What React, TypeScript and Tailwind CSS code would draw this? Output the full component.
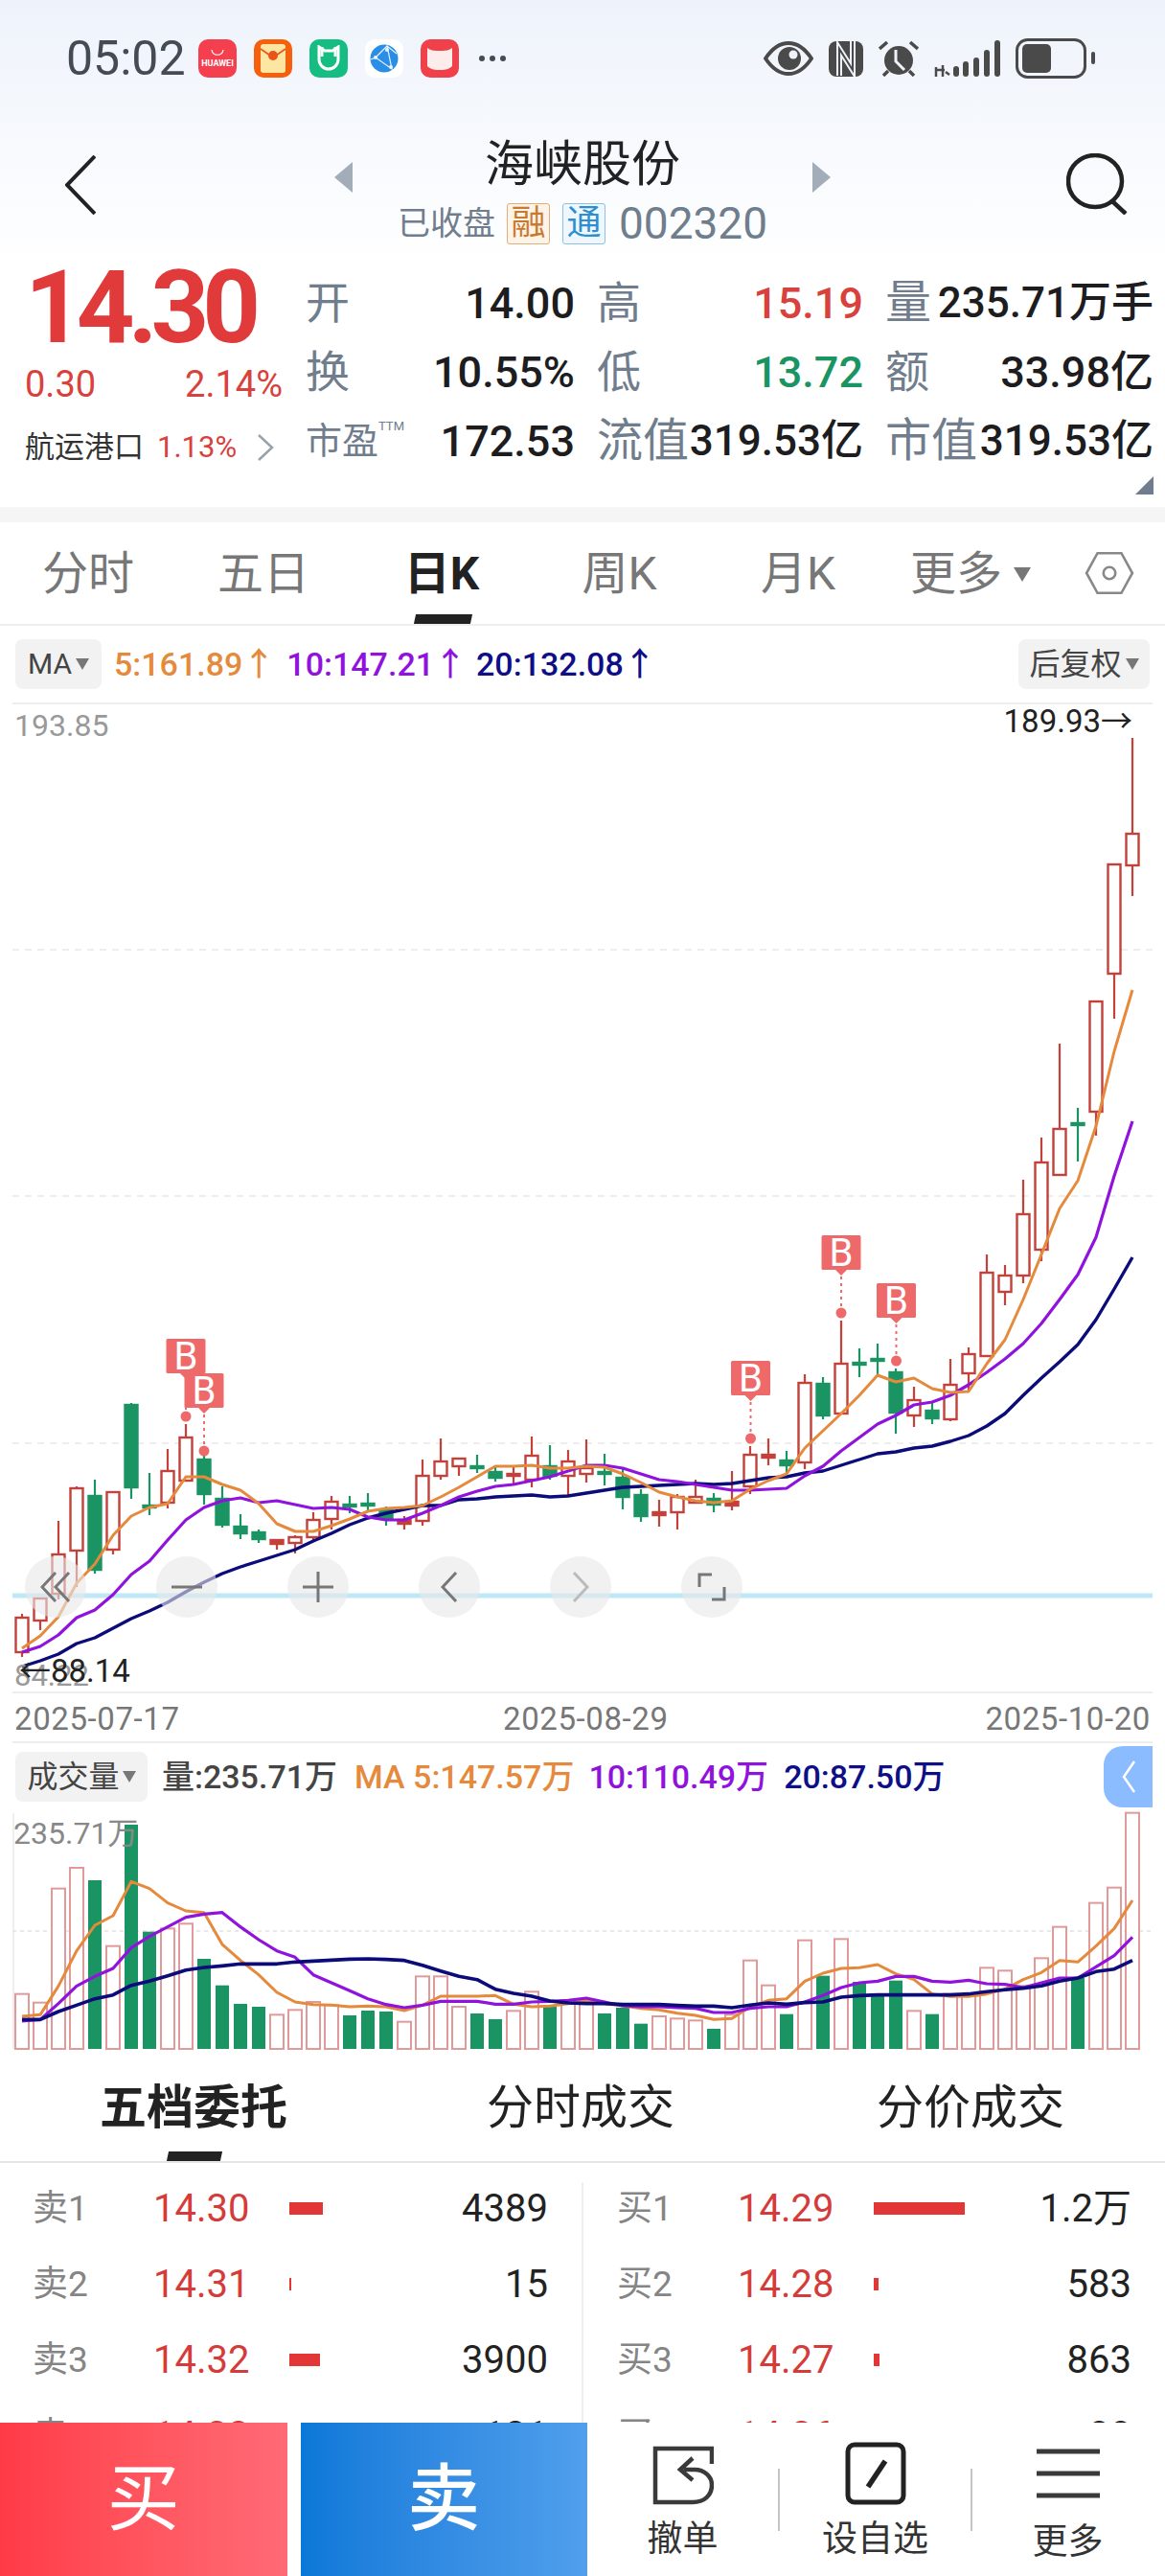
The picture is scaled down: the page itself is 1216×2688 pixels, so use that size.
import React from "react";

const RED = "#c4403a";
const GREEN = "#1b9464";
const ORANGE = "#e58a3c";
const PURPLE = "#9013dd";
const NAVY = "#0b0b7a";

// [colour, high, body top, body bottom, low]
const candles: [string, number, number, number, number][] = [
  ["r", 1685, 1689, 1725, 1730], ["r", 1669, 1669, 1692, 1702], ["r", 1588, 1623, 1664, 1670], ["r", 1552, 1554, 1619, 1657],
  ["g", 1545, 1562, 1639, 1643], ["r", 1558, 1558, 1618, 1623], ["g", 1465, 1467, 1553, 1565], ["g", 1538, 1572, 1574, 1582],
  ["r", 1513, 1536, 1569, 1575], ["r", 1487, 1501, 1546, 1546], ["g", 1520, 1524, 1560, 1571], ["g", 1552, 1565, 1592, 1595],
  ["g", 1581, 1594, 1601, 1607], ["g", 1597, 1600, 1607, 1611], ["r", 1607, 1608, 1612, 1618], ["r", 1603, 1605, 1611, 1622],
  ["r", 1579, 1587, 1605, 1609], ["r", 1562, 1568, 1586, 1597], ["g", 1562, 1571, 1573, 1580], ["g", 1559, 1570, 1572, 1577],
  ["g", 1573, 1577, 1586, 1593], ["r", 1583, 1587, 1591, 1597], ["r", 1524, 1541, 1588, 1593], ["r", 1502, 1526, 1541, 1545],
  ["r", 1522, 1523, 1531, 1541], ["g", 1519, 1531, 1533, 1538], ["g", 1532, 1537, 1543, 1547], ["r", 1532, 1539, 1541, 1550],
  ["r", 1500, 1520, 1545, 1553], ["g", 1509, 1531, 1541, 1545], ["r", 1514, 1526, 1541, 1561], ["r", 1503, 1533, 1539, 1548],
  ["g", 1518, 1537, 1539, 1551], ["g", 1534, 1543, 1563, 1576], ["g", 1555, 1561, 1583, 1589], ["r", 1566, 1579, 1582, 1594],
  ["r", 1560, 1563, 1579, 1597], ["r", 1545, 1563, 1569, 1569], ["g", 1559, 1565, 1571, 1579], ["r", 1536, 1568, 1572, 1577],
  ["r", 1510, 1519, 1552, 1560], ["r", 1502, 1519, 1522, 1530], ["g", 1515, 1525, 1530, 1538], ["r", 1435, 1444, 1527, 1534],
  ["g", 1438, 1445, 1478, 1482], ["r", 1379, 1424, 1476, 1476], ["g", 1408, 1423, 1425, 1438], ["g", 1403, 1419, 1421, 1436],
  ["g", 1429, 1433, 1475, 1497], ["r", 1448, 1462, 1478, 1490], ["g", 1464, 1473, 1481, 1487], ["r", 1419, 1446, 1482, 1484],
  ["r", 1407, 1414, 1434, 1452], ["r", 1310, 1329, 1416, 1416], ["r", 1321, 1332, 1349, 1363], ["r", 1232, 1268, 1332, 1340],
  ["r", 1188, 1214, 1305, 1317], ["r", 1090, 1179, 1227, 1227], ["g", 1157, 1173, 1175, 1213], ["r", 1046, 1046, 1161, 1186],
  ["r", 903, 903, 1017, 1064], ["r", 771, 871, 904, 936],
];

const ma5 = [1721, 1708, 1688, 1653, 1633, 1603, 1583, 1574, 1570, 1542, 1542, 1550, 1556, 1570, 1591, 1599, 1599, 1593, 1586, 1578, 1575, 1574, 1572, 1563, 1553, 1542, 1531, 1531, 1530, 1533, 1533, 1531, 1532, 1539, 1548, 1558, 1563, 1567, 1569, 1567, 1555, 1546, 1539, 1512, 1494, 1476, 1457, 1436, 1443, 1439, 1450, 1454, 1453, 1424, 1399, 1357, 1310, 1262, 1233, 1176, 1098, 1034];
const ma10 = [1725, 1719, 1707, 1689, 1681, 1665, 1644, 1630, 1608, 1587, 1574, 1567, 1564, 1569, 1567, 1571, 1575, 1574, 1576, 1584, 1587, 1587, 1580, 1572, 1563, 1557, 1552, 1550, 1546, 1542, 1536, 1530, 1530, 1533, 1539, 1545, 1547, 1550, 1553, 1556, 1556, 1555, 1554, 1541, 1531, 1515, 1501, 1487, 1478, 1467, 1464, 1457, 1446, 1433, 1419, 1403, 1382, 1357, 1331, 1292, 1228, 1171];
const ma20 = [1740, 1734, 1727, 1716, 1710, 1700, 1690, 1682, 1673, 1662, 1652, 1643, 1636, 1630, 1624, 1618, 1609, 1601, 1592, 1585, 1580, 1576, 1572, 1572, 1566, 1565, 1563, 1562, 1561, 1563, 1562, 1559, 1556, 1553, 1552, 1551, 1550, 1549, 1550, 1549, 1546, 1543, 1542, 1538, 1536, 1530, 1524, 1518, 1516, 1512, 1510, 1505, 1499, 1489, 1476, 1457, 1439, 1422, 1404, 1378, 1346, 1313];

const volTops = [905, 932, 575, 510, 549, 755, 375, 710, 700, 685, 795, 878, 936, 945, 970, 955, 930, 940, 972, 957, 960, 992, 850, 850, 945, 966, 984, 958, 898, 945, 935, 930, 966, 948, 998, 975, 982, 988, 1014, 970, 800, 878, 968, 737, 848, 733, 867, 912, 863, 958, 968, 905, 910, 823, 832, 880, 793, 695, 855, 620, 572, 338];
const volMa5 = [975, 970, 880, 770, 690, 660, 553, 575, 620, 645, 650, 750, 800, 845, 900, 930, 938, 940, 945, 943, 945, 957, 940, 912, 912, 912, 910, 937, 945, 943, 935, 925, 935, 942, 950, 955, 965, 972, 985, 982, 945, 925, 920, 865, 840, 825, 823, 813, 842, 860, 905, 913, 913, 905, 890, 860, 838, 800, 805, 755, 700, 612];
const volMa10 = [990, 985, 935, 880, 850, 825, 760, 725, 695, 665, 655, 650, 695, 735, 770, 790, 845, 870, 895, 920, 938, 948, 940, 928, 928, 928, 937, 937, 930, 928, 925, 918, 930, 942, 945, 945, 948, 950, 963, 963, 950, 945, 945, 930, 910, 885, 870, 865, 850, 850, 865, 868, 862, 873, 875, 885, 870, 855, 855, 820, 785, 727];
const volMa20 = [985, 985, 960, 940, 920, 908, 878, 865, 848, 830, 822, 817, 811, 811, 811, 805, 802, 799, 796, 795, 797, 800, 815, 833, 850, 860, 890, 903, 912, 927, 933, 935, 935, 938, 938, 938, 941, 943, 943, 948, 940, 933, 937, 932, 930, 915, 910, 908, 908, 908, 908, 908, 905, 898, 892, 887, 880, 865, 855, 835, 827, 800];

const markers = [
  { x: 194, top: 1398, dot: 1479 },
  { x: 213, top: 1434, dot: 1515 },
  { x: 783.5, top: 1421, dot: 1502 },
  { x: 878, top: 1290, dot: 1371 },
  { x: 935.5, top: 1340, dot: 1421 },
];

const candleX = (i: number) => 23 + 19 * i;
const volY = (v: number) => 1780 + v / 3;
const points = (ys: number[]) => ys.map((y, i) => `${candleX(i)},${y}`).join(" ");

const sell = [
  { label: "卖1", price: "14.30", bar: 35, value: "4389" },
  { label: "卖2", price: "14.31", bar: 1.5, value: "15" },
  { label: "卖3", price: "14.32", bar: 32, value: "3900" },
  { label: "卖4", price: "14.33", bar: 2, value: "131" },
];
const buy = [
  { label: "买1", price: "14.29", bar: 95, value: "1.2万" },
  { label: "买2", price: "14.28", bar: 4.5, value: "583" },
  { label: "买3", price: "14.27", bar: 6, value: "863" },
  { label: "买4", price: "14.26", bar: 1.5, value: "88" },
];

function QuoteCell({ label, value, color, tight }: { label: string; value: string; color?: string; tight?: boolean }) {
  return (
    <div className="flex items-center justify-between whitespace-nowrap">
      <span className={`leading-none text-[#6f7d8c] ${tight ? "text-[48px]" : "text-[46px]"}`}>{label}</span>
      <span className={`font-medium leading-none ${tight ? "text-[44px]" : "text-[45px]"} ${color ?? "text-[#1d1d1f]"}`}>{value}</span>
    </div>
  );
}

function OrderRow({ row }: { row: { label: string; price: string; bar: number; value: string } }) {
  return (
    <div className="flex h-[79px] shrink-0 items-center">
      <span className="w-[126px] text-[37px] leading-none text-[#858585]">{row.label}</span>
      <span className="w-[142px] text-[40px] leading-none text-[#d43c3c]">{row.price}</span>
      <div className="flex-1">
        <div className="h-[13px] bg-[#e33737]" style={{ width: row.bar }} />
      </div>
      <span className="text-[40px] leading-none text-[#222]">{row.value}</span>
    </div>
  );
}

function RoundButton({ className, children }: { className: string; children: React.ReactNode }) {
  return (
    <div className={`absolute top-[891px] flex h-[64px] w-[64px] items-center justify-center rounded-full bg-[#e8e8e8]/60 ${className}`}>
      {children}
    </div>
  );
}

export default function App() {
  return (
    <div className="flex h-[2688px] w-[1216px] flex-col overflow-hidden bg-white font-[Roboto,'Noto_Sans_CJK_SC',sans-serif]">
      {/* header */}
      <div className="h-[280px] shrink-0 bg-linear-to-b from-[#eef3fb] to-white">
        <div className="flex h-[122px] items-center pl-[69px]">
          <span className="w-[138px] text-[50px] leading-none text-[#444b52]">05:02</span>
          <div className="flex items-center gap-[18px]">
            <div className="flex h-[40px] w-[40px] flex-col items-center justify-center rounded-[10px] bg-[#f4404e]">
              <svg width="16" height="9" viewBox="0 0 16 9"><path d="M2 1c1 7 11 7 12 0" fill="none" stroke="#fff" strokeWidth="1.2" /></svg>
              <span className="mt-[1px] text-[9px] font-bold leading-[11px] text-white">HUAWEI</span>
            </div>
            <div className="flex h-[40px] w-[40px] items-center justify-center rounded-[10px] bg-[#f4600c]">
              <svg width="28" height="32" viewBox="0 0 28 32">
                <rect x="1" y="1" width="26" height="30" rx="3" fill="#fde6a2" />
                <path d="M1 6l13 9L27 6" fill="none" stroke="#e8541a" strokeWidth="1.6" />
                <circle cx="14" cy="13" r="5" fill="#e8541a" />
              </svg>
            </div>
            <div className="flex h-[40px] w-[40px] items-center justify-center rounded-[10px] bg-[#16bd83]">
              <svg width="26" height="28" viewBox="0 0 26 28">
                <path d="M3 2l6 4h8l6-4v13a10 10 0 0 1-20 0z" fill="none" stroke="#fff" strokeWidth="3" />
                <path d="M6 2v10M20 2v10" stroke="#fff" strokeWidth="3" />
              </svg>
            </div>
            <div className="flex h-[40px] w-[40px] items-center justify-center rounded-[10px] bg-white">
              <svg width="30" height="30" viewBox="0 0 30 30">
                <circle cx="15" cy="15" r="14.5" fill="#2b8ee6" />
                <path d="M18 2L6 14l17 12zM18 2l5 24M6 14l-5 2M18 2l10 8" fill="none" stroke="#e7f3fd" strokeWidth="1.2" />
                <circle cx="18" cy="6" r="2" fill="#e7f3fd" />
                <circle cx="6" cy="14" r="2" fill="#e7f3fd" />
                <circle cx="22" cy="24" r="2" fill="#e7f3fd" />
              </svg>
            </div>
            <div className="flex h-[40px] w-[40px] items-center justify-center rounded-[10px] bg-[#f0404a]">
              <svg width="28" height="28" viewBox="0 0 28 28"><path d="M1 3c4 3 8 3 13 3s9 0 13-3v19c-4 4-9 4-13 4s-9 0-13-4z" fill="#fcecec" /></svg>
            </div>
          </div>
          <div className="ml-[21px] flex gap-[5px]">
            <span className="h-[6px] w-[6px] rounded-full bg-[#444b52]" />
            <span className="h-[6px] w-[6px] rounded-full bg-[#444b52]" />
            <span className="h-[6px] w-[6px] rounded-full bg-[#444b52]" />
          </div>
          <div className="ml-[269px] flex items-center">
            <svg width="52" height="36" viewBox="0 0 52 36">
              <path d="M2 18C10 6 18 2 26 2s16 4 24 16c-8 12-16 16-24 16S10 30 2 18z" fill="none" stroke="#4a4a4a" strokeWidth="4" />
              <circle cx="27" cy="18" r="12" fill="#4a4a4a" />
              <circle cx="31" cy="14" r="4.5" fill="#eef3fb" />
            </svg>
            <svg className="ml-[16px]" width="36" height="37" viewBox="0 0 36 37">
              <rect width="36" height="37" rx="8" fill="#4a4a4a" />
              <path d="M11 36V8l14 22V0" fill="none" stroke="#eef3fb" strokeWidth="6" />
              <path d="M11 36V8l14 22V0" fill="none" stroke="#4a4a4a" strokeWidth="2" />
            </svg>
            <svg className="ml-[16px]" width="42" height="38" viewBox="0 0 42 38">
              <circle cx="21" cy="21" r="15" fill="#4a4a4a" />
              <path d="M18 10v12l9 9" fill="none" stroke="#eef3fb" strokeWidth="3" />
              <path d="M1 9l8-7M41 9l-8-7M5 37l5-5M37 37l-5-5" stroke="#4a4a4a" strokeWidth="3.5" />
            </svg>
            <svg className="ml-[15px]" width="70" height="38" viewBox="0 0 70 38">
              <path d="M3 31h9M3 28v10M10 26v12M13 33l4 3" fill="none" stroke="#4a4a4a" strokeWidth="2.5" />
              <rect x="21" y="27" width="6" height="11" rx="3" fill="#4a4a4a" />
              <rect x="31" y="22" width="6" height="16" rx="3" fill="#4a4a4a" />
              <rect x="42" y="18" width="6" height="20" rx="3" fill="#4a4a4a" />
              <rect x="53" y="10" width="6" height="28" rx="3" fill="#4a4a4a" />
              <rect x="64" y="0" width="6" height="38" rx="3" fill="#4a4a4a" />
            </svg>
            <svg className="ml-[16px]" width="83" height="42" viewBox="0 0 83 42">
              <rect x="1.5" y="1.5" width="71" height="39" rx="11" fill="none" stroke="#4a4a4a" strokeWidth="3" />
              <rect x="7" y="6" width="30" height="30" rx="5" fill="#4a4a4a" />
              <rect x="79" y="14" width="4" height="13" rx="2" fill="#4a4a4a" />
            </svg>
          </div>
        </div>
        <div className="flex h-[158px]">
          <div className="w-[349px] pl-[68px] pt-[40px]">
            <svg width="32" height="62" viewBox="0 0 32 62"><path d="M31 1L2 31l29 30" fill="none" stroke="#222" strokeWidth="4" /></svg>
          </div>
          <svg className="mt-[47px]" width="19" height="32" viewBox="0 0 19 32"><path d="M19 0v32L0 16z" fill="#a2adb9" /></svg>
          <div className="flex flex-1 flex-col items-center pt-[24px]">
            <span className="h-[52px] text-[51px] leading-[52px] text-[#222]">海峡股份</span>
            <div className="mt-[13px] flex h-[44px] items-center">
              <span className="text-[34px] leading-none text-[#6f7d8c]">已收盘</span>
              <span className="ml-[12px] flex h-[43px] w-[45px] items-center justify-center rounded-[3px] border border-[#dfae7c] bg-[#fdf3e7] text-[36px] leading-none text-[#c87a30]">融</span>
              <span className="ml-[13px] flex h-[43px] w-[45px] items-center justify-center rounded-[3px] border border-[#8fc0e4] bg-[#eef7fd] text-[36px] leading-none text-[#2f8ed0]">通</span>
              <span className="ml-[14px] text-[46px] leading-none text-[#6f7d8c]">002320</span>
            </div>
          </div>
          <svg className="mt-[47px]" width="19" height="32" viewBox="0 0 19 32"><path d="M0 0v32l19-16z" fill="#a2adb9" /></svg>
          <div className="w-[349px] pl-[246px] pt-[38px]">
            <svg width="66" height="64" viewBox="0 0 66 64">
              <ellipse cx="30" cy="29" rx="28" ry="27" fill="none" stroke="#222" strokeWidth="4.5" />
              <path d="M48 50l14 13" stroke="#222" strokeWidth="4.5" />
            </svg>
          </div>
        </div>
      </div>

      {/* quote */}
      <div className="relative flex h-[249px] shrink-0 bg-white">
        <div className="w-[319px] shrink-0 pl-[26px]">
          <div className="h-[82px] text-[106px] font-bold leading-[82px] tracking-[-7px] text-[#e03a3a]">14.30</div>
          <div className="mt-[20px] flex w-[269px] justify-between text-[38px] leading-none text-[#d8413c]">
            <span>0.30</span>
            <span>2.14%</span>
          </div>
          <div className="mt-[31px] flex items-center">
            <span className="w-[138px] text-[31px] leading-none text-[#333]">航运港口</span>
            <span className="w-[104px] text-[31px] leading-none text-[#d8413c]">1.13%</span>
            <svg width="18" height="28" viewBox="0 0 18 28"><path d="M2 1l14 13L2 27" fill="none" stroke="#98a2ac" strokeWidth="2.5" /></svg>
          </div>
        </div>
        <div className="grid h-[216px] grid-cols-[281px_278px_280px] grid-rows-3 gap-x-[23px]">
          <QuoteCell label="开" value="14.00" />
          <QuoteCell label="高" value="15.19" color="text-[#d8413c]" />
          <QuoteCell label="量" value="235.71万手" tight />
          <QuoteCell label="换" value="10.55%" />
          <QuoteCell label="低" value="13.72" color="text-[#1b9464]" />
          <QuoteCell label="额" value="33.98亿" />
          <div className="flex items-center justify-between whitespace-nowrap">
            <span className="flex items-start text-[38px] leading-none text-[#6f7d8c]">
              市盈<span className="mt-[-3px] text-[13px] leading-none">TTM</span>
            </span>
            <span className="text-[45px] font-medium leading-none text-[#1d1d1f]">172.53</span>
          </div>
          <QuoteCell label="流值" value="319.53亿" tight />
          <QuoteCell label="市值" value="319.53亿" tight />
        </div>
        <svg className="absolute left-[1185px] top-[217px]" width="19" height="19" viewBox="0 0 19 19"><path d="M19 0v19H0z" fill="#6f7d8c" /></svg>
      </div>

      <div className="h-[16px] shrink-0 bg-[#f5f5f5]" />

      {/* period tabs */}
      <div className="flex h-[108px] shrink-0 items-center border-b-2 border-[#eeeeee]">
        <div className="grid h-full w-[1116px] grid-cols-6 items-center pt-[2px] text-center text-[48px] leading-none text-[#777]">
          <span className="pr-[2px]">分时</span>
          <span className="pr-[8px]">五日</span>
          <span className="relative flex h-full items-center justify-center pr-[8px] font-bold text-[#222]">
            日K
            <span className="absolute bottom-0 left-[61px] h-[10px] w-[59px] -skew-x-12 bg-[#222]" />
          </span>
          <span className="pr-[9px]">周K</span>
          <span className="pr-[8px]">月K</span>
          <span className="flex items-center justify-center pr-[20px]">
            更多
            <svg className="ml-[12px]" width="18" height="15" viewBox="0 0 18 15"><path d="M0 0h18L9 15z" fill="#777" /></svg>
          </span>
        </div>
        <svg className="ml-[16px]" width="52" height="46" viewBox="0 0 50 44">
          <path d="M13 2h24l11 20-11 20H13L2 22z" fill="none" stroke="#888" strokeWidth="2.5" />
          <circle cx="25" cy="22" r="6" fill="none" stroke="#888" strokeWidth="2.5" />
        </svg>
      </div>

      {/* MA legend */}
      <div className="flex h-[80px] shrink-0 items-center justify-between pl-[16px] pr-[16px]">
        <div className="flex items-center text-[34px] leading-none">
          <span className="flex h-[52px] w-[90px] items-center justify-center rounded-[8px] bg-[#f2f2f2] text-[30px] text-[#444]">
            MA
            <svg className="ml-[4px]" width="14" height="12" viewBox="0 0 14 12"><path d="M0 0h14L7 12z" fill="#777" /></svg>
          </span>
          <span className="ml-[13px] font-medium text-[#e58a3c]">5:161.89↑</span>
          <span className="ml-[12px] font-medium text-[#9013dd]">10:147.21↑</span>
          <span className="ml-[10px] font-medium text-[#0e0e86]">20:132.08↑</span>
        </div>
        <span className="flex h-[52px] w-[137px] items-center justify-center rounded-[8px] bg-[#f2f2f2] text-[32px] leading-none text-[#444]">
          后复权
          <svg className="ml-[4px]" width="14" height="12" viewBox="0 0 14 12"><path d="M0 0h14L7 12z" fill="#777" /></svg>
        </span>
      </div>

      {/* candle chart */}
      <div className="relative h-[1086px] shrink-0">
        <svg className="absolute inset-0" width="1216" height="1086" viewBox="0 734 1216 1086">
          <path d="M13 735H1203M13 1767H1203M13 1819H1203" stroke="#eeeeee" strokeWidth="2" fill="none" />
          <path d="M13 992H1203M13 1249H1203M13 1507H1203" stroke="#eeeeee" strokeWidth="2" strokeDasharray="7 6" fill="none" />
          <path d="M13 1666H1203" stroke="#bfe8f7" strokeWidth="5" />
          {candles.map(([c, high, top, bottom, low], i) => {
            const x = candleX(i);
            const stroke = c === "r" ? RED : GREEN;
            return (
              <g key={i}>
                <path d={`M${x} ${high}V${low}`} stroke={stroke} strokeWidth="2.2" />
                <rect
                  x={x - 6.5}
                  y={top}
                  width="13"
                  height={bottom - top}
                  fill={c === "r" && bottom - top > 5 ? "#fff" : stroke}
                  stroke={stroke}
                  strokeWidth="2.4"
                />
              </g>
            );
          })}
          <polyline points={points(ma20)} fill="none" stroke={NAVY} strokeWidth="3.4" strokeLinejoin="round" />
          <polyline points={points(ma10)} fill="none" stroke={PURPLE} strokeWidth="3.2" strokeLinejoin="round" />
          <polyline points={points(ma5)} fill="none" stroke={ORANGE} strokeWidth="3" strokeLinejoin="round" />
          {markers.map((m) => (
            <g key={m.x}>
              <path d={`M${m.x} ${m.top + 43}V${m.dot}`} stroke="#ee6a6a" strokeWidth="2" strokeDasharray="3 4" />
              <circle cx={m.x} cy={m.dot} r="5.5" fill="#ee6a6a" />
              <path d={`M${m.x - 19} ${m.top}h38a1.5 1.5 0 0 1 1.5 1.5v33a1.5 1.5 0 0 1-1.5 1.5h-13l-6 6-6-6h-13a1.5 1.5 0 0 1-1.5-1.5v-33a1.5 1.5 0 0 1 1.5-1.5z`} fill="#ee6a6a" />
              <text x={m.x} y={m.top + 32} textAnchor="middle" fontSize="40" fill="#fff">B</text>
            </g>
          ))}
        </svg>
        <span className="absolute left-[15px] top-[8px] text-[32px] leading-none text-[#999]">193.85</span>
        <span className="absolute right-[34px] top-[5px] text-[33px] leading-[30px] text-[#222]">189.93→</span>
        <span className="absolute left-[15px] top-[1001px] text-[31px] leading-[30px] text-[#999]">84.22</span>
        <span className="absolute left-[20px] top-[996px] text-[33px] leading-[30px] text-[#222]">←88.14</span>
        <span className="absolute left-[15px] top-[1046px] text-[33px] leading-[30px] tracking-[0.6px] text-[#777]">2025-07-17</span>
        <span className="absolute left-[525px] top-[1046px] text-[33px] leading-[30px] tracking-[0.6px] text-[#777]">2025-08-29</span>
        <span className="absolute right-[15px] top-[1046px] text-[33px] leading-[30px] tracking-[0.6px] text-[#777]">2025-10-20</span>

        <RoundButton className="left-[26px]">
          <svg width="32" height="34" viewBox="0 0 32 34"><path d="M16 2L2 17l14 15M30 2L16 17l14 15" fill="none" stroke="#777" strokeWidth="3" /></svg>
        </RoundButton>
        <RoundButton className="left-[163px]">
          <svg width="32" height="4" viewBox="0 0 32 4"><path d="M0 2h32" stroke="#777" strokeWidth="3" /></svg>
        </RoundButton>
        <RoundButton className="left-[300px]">
          <svg width="32" height="32" viewBox="0 0 32 32"><path d="M0 16h32M16 0v32" stroke="#777" strokeWidth="3" /></svg>
        </RoundButton>
        <RoundButton className="left-[437px]">
          <svg width="18" height="32" viewBox="0 0 18 32"><path d="M16 1L2 16l14 15" fill="none" stroke="#777" strokeWidth="3" /></svg>
        </RoundButton>
        <RoundButton className="left-[574px]">
          <svg width="18" height="32" viewBox="0 0 18 32"><path d="M2 1l14 15L2 31" fill="none" stroke="#bbb" strokeWidth="3" /></svg>
        </RoundButton>
        <RoundButton className="left-[711px]">
          <svg width="30" height="30" viewBox="0 0 30 30"><path d="M15 2H2v13M15 28h13V15" fill="none" stroke="#777" strokeWidth="3" /></svg>
        </RoundButton>
      </div>

      {/* volume legend */}
      <div className="relative flex h-[70px] shrink-0 items-center pl-[16px] text-[34px] leading-none">
        <span className="flex h-[52px] w-[138px] items-center justify-center rounded-[8px] bg-[#f2f2f2] text-[32px] text-[#444]">
          成交量
          <svg className="ml-[3px]" width="14" height="12" viewBox="0 0 14 12"><path d="M0 0h14L7 12z" fill="#777" /></svg>
        </span>
        <span className="ml-[15px] font-medium text-[#444]">量:235.71万</span>
        <span className="ml-[18px] font-medium text-[#e58a3c]">MA 5:147.57万</span>
        <span className="ml-[15px] font-medium text-[#9013dd]">10:110.49万</span>
        <span className="ml-[16px] font-medium text-[#0e0e86]">20:87.50万</span>
        <span className="absolute right-[13px] top-[3px] flex h-[64px] w-[51px] items-center justify-center rounded-l-[20px] bg-[#8abcff]">
          <svg width="16" height="36" viewBox="0 0 16 36"><path d="M14 2L3 18l11 16" fill="none" stroke="#fff" strokeWidth="2.5" /></svg>
        </span>
      </div>

      {/* volume chart */}
      <div className="relative h-[260px] shrink-0">
        <svg className="absolute inset-0" width="1216" height="260" viewBox="0 1890 1216 260">
          <path d="M14 1893V2139" stroke="#eeeeee" strokeWidth="2" />
          <path d="M13 2016H1203" stroke="#e8e8e8" strokeWidth="2" strokeDasharray="4 4" />
          {volTops.map((top, i) => {
            const y = volY(top);
            const green = candles[i][0] === "g";
            return (
              <rect
                key={i}
                x={candleX(i) - 7}
                y={y}
                width="14"
                height={2139 - y}
                fill={green ? GREEN : "#fff"}
                stroke={green ? GREEN : "#e09a9a"}
                strokeWidth={green ? 0 : 2}
              />
            );
          })}
          <polyline points={points(volMa5.map(volY))} fill="none" stroke={ORANGE} strokeWidth="3" strokeLinejoin="round" />
          <polyline points={points(volMa10.map(volY))} fill="none" stroke={PURPLE} strokeWidth="3.2" strokeLinejoin="round" />
          <polyline points={points(volMa20.map(volY))} fill="none" stroke={NAVY} strokeWidth="3.6" strokeLinejoin="round" />
        </svg>
        <span className="absolute left-[14px] top-[9px] text-[32px] leading-[30px] text-[#888]">235.71万</span>
      </div>

      {/* order book tabs */}
      <div className="relative flex h-[108px] shrink-0 items-center border-b-2 border-[#e5e5e5] pb-[6px] text-[49px] leading-none text-[#222]">
        <span className="ml-[104px] font-bold">五档委托</span>
        <span className="ml-[208px]">分时成交</span>
        <span className="ml-[211px]">分价成交</span>
        <span className="absolute bottom-0 left-[175px] h-[10px] w-[56px] -skew-x-12 bg-[#222]" />
      </div>

      {/* order book */}
      <div className="flex min-h-0 flex-1 overflow-hidden pt-[8px]">
        <div className="flex w-[607px] flex-col pl-[34px] pr-[35px]">
          {sell.map((row) => (
            <OrderRow key={row.label} row={row} />
          ))}
        </div>
        <div className="mt-[12px] w-[2px] bg-[#eeeeee]" />
        <div className="flex flex-1 flex-col pl-[35px] pr-[35px]">
          {buy.map((row) => (
            <OrderRow key={row.label} row={row} />
          ))}
        </div>
      </div>

      {/* bottom bar */}
      <div className="flex h-[160px] shrink-0 bg-white">
        <div className="flex w-[300px] items-center justify-center bg-linear-to-r from-[#ff3a47] to-[#ff6a75] text-[76px] leading-none text-white">买</div>
        <div className="ml-[14px] flex w-[300px] items-center justify-center bg-linear-to-r from-[#0a78d8] to-[#4f9fec] text-[76px] font-medium leading-none text-white">卖</div>
        <div className="flex flex-1 pr-[2px]">
          <div className="flex w-[199px] flex-col items-center pt-[24px]">
            <svg width="64" height="62" viewBox="0 0 64 62">
              <path d="M33 25h11c10 0 18 7 18 16 0 11-8 18-20 18H3V3h59v16" fill="none" stroke="#3a3a3a" strokeWidth="4.5" />
              <path d="M42 13L29 25l13 11" fill="none" stroke="#3a3a3a" strokeWidth="4.5" />
            </svg>
            <span className="mt-[17px] text-[37px] leading-none text-[#333]">撤单</span>
          </div>
          <div className="mt-[48px] h-[65px] w-[2px] bg-[#c4c4c4]" />
          <div className="flex w-[199px] flex-col items-center pt-[20px]">
            <svg width="64" height="66" viewBox="0 0 64 66">
              <rect x="3" y="3" width="58" height="60" rx="7" fill="none" stroke="#222" strokeWidth="5" />
              <path d="M42 20L24 47" stroke="#222" strokeWidth="5.5" />
            </svg>
            <span className="mt-[17px] text-[37px] leading-none text-[#333]">设自选</span>
          </div>
          <div className="mt-[48px] h-[65px] w-[2px] bg-[#c4c4c4]" />
          <div className="flex w-[199px] flex-col items-center pt-[27px]">
            <svg width="66" height="52" viewBox="0 0 66 52">
              <path d="M0 3h66M0 26h66M0 49h66" stroke="#3a3a3a" strokeWidth="5" />
            </svg>
            <span className="mt-[27px] text-[37px] leading-none text-[#333]">更多</span>
          </div>
        </div>
      </div>
    </div>
  );
}
